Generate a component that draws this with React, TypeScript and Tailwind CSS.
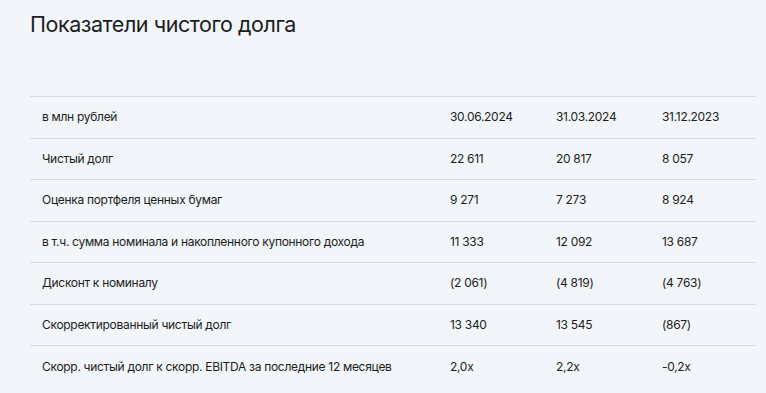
const rows: string[][] = [
  ["в млн рублей", "30.06.2024", "31.03.2024", "31.12.2023"],
  ["Чистый долг", "22 611", "20 817", "8 057"],
  ["Оценка портфеля ценных бумаг", "9 271", "7 273", "8 924"],
  ["в т.ч. сумма номинала и накопленного купонного дохода", "11 333", "12 092", "13 687"],
  ["Дисконт к номиналу", "(2 061)", "(4 819)", "(4 763)"],
  ["Скорректированный чистый долг", "13 340", "13 545", "(867)"],
  ["Скорр. чистый долг к скорр. EBITDA за последние 12 месяцев", "2,0x", "2,2x", "-0,2x"],
];

export default function App() {
  return (
    <div className="min-h-screen bg-[#f2f5f9] text-[#1b1d21] px-[30px] pt-[9px]" style={{ fontFamily: "Inter, 'Noto Sans', sans-serif" }}>
      <h1 className="text-[21.5px] leading-[30px] font-normal tracking-[-0.45px]">Показатели чистого долга</h1>
      <table className="mt-[57px] w-[726px] border-collapse text-[12px] tracking-[-0.3px]">
        <tbody>
          {rows.map((r, i) => (
            <tr key={i} className={i < rows.length - 1 ? "border-t border-b border-[#d3dde8]" : "border-t border-[#d3dde8]"}>
              <td className="w-[408px] h-[41.5px] pl-3 align-middle">{r[0]}</td>
              <td className="w-[106px] pl-3 align-middle">{r[1]}</td>
              <td className="w-[106px] pl-3 align-middle">{r[2]}</td>
              <td className="pl-3 align-middle">{r[3]}</td>
            </tr>
          ))}
        </tbody>
      </table>
    </div>
  );
}
